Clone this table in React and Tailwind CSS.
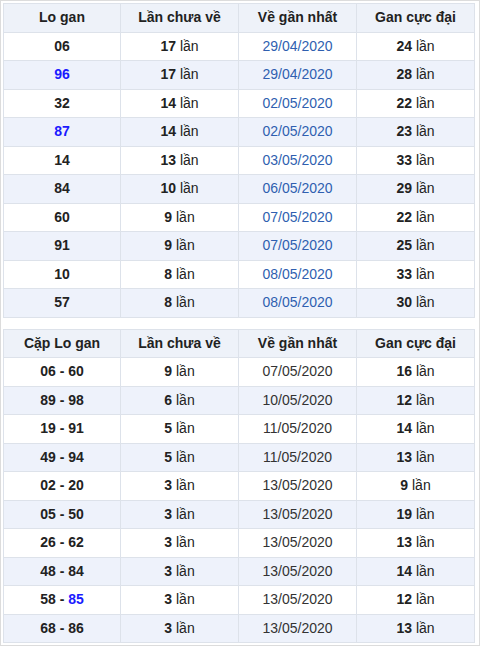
import React from 'react';

const loGan = [
  { so: '06', lan: 17, ngay: '29/04/2020', max: 24 },
  { so: '96', lan: 17, ngay: '29/04/2020', max: 28, hot: true },
  { so: '32', lan: 14, ngay: '02/05/2020', max: 22 },
  { so: '87', lan: 14, ngay: '02/05/2020', max: 23, hot: true },
  { so: '14', lan: 13, ngay: '03/05/2020', max: 33 },
  { so: '84', lan: 10, ngay: '06/05/2020', max: 29 },
  { so: '60', lan: 9, ngay: '07/05/2020', max: 22 },
  { so: '91', lan: 9, ngay: '07/05/2020', max: 25 },
  { so: '10', lan: 8, ngay: '08/05/2020', max: 33 },
  { so: '57', lan: 8, ngay: '08/05/2020', max: 30 },
];

const capLoGan = [
  { a: '06', b: '60', lan: 9, ngay: '07/05/2020', max: 16 },
  { a: '89', b: '98', lan: 6, ngay: '10/05/2020', max: 12 },
  { a: '19', b: '91', lan: 5, ngay: '11/05/2020', max: 14 },
  { a: '49', b: '94', lan: 5, ngay: '11/05/2020', max: 13 },
  { a: '02', b: '20', lan: 3, ngay: '13/05/2020', max: 9 },
  { a: '05', b: '50', lan: 3, ngay: '13/05/2020', max: 19 },
  { a: '26', b: '62', lan: 3, ngay: '13/05/2020', max: 13 },
  { a: '48', b: '84', lan: 3, ngay: '13/05/2020', max: 14 },
  { a: '58', b: '85', lan: 3, ngay: '13/05/2020', max: 12, hotB: true },
  { a: '68', b: '86', lan: 3, ngay: '13/05/2020', max: 13 },
];

const cell = 'border border-[#dde2ea] text-center h-[28.5px] p-0';

const Lan = ({ n }) => (
  <>
    <span className="font-bold">{n}</span> lần
  </>
);

const Header = ({ first }) => (
  <thead>
    <tr className="bg-[#eef2f9]">
      <th className={`${cell} w-[117px] font-bold`}>{first}</th>
      <th className={`${cell} w-[118px] font-bold`}>Lần chưa về</th>
      <th className={`${cell} w-[118px] font-bold`}>Về gần nhất</th>
      <th className={`${cell} font-bold`}>Gan cực đại</th>
    </tr>
  </thead>
);

export default function App() {
  return (
    <div
      className="w-[480px] h-[646px] border border-[#dcdcdc] p-[2px] bg-white text-[14px] text-[#222]"
      style={{ fontFamily: '"Liberation Sans", Arial, sans-serif' }}
    >
      <table className="w-[472px] border-collapse table-fixed">
        <Header first="Lo gan" />
        <tbody>
          {loGan.map((r, i) => (
            <tr key={r.so} className={i % 2 ? 'bg-[#eef2fb]' : 'bg-white'}>
              <td className={`${cell} font-bold ${r.hot ? 'text-[#1a1aff]' : ''}`}>{r.so}</td>
              <td className={cell}><Lan n={r.lan} /></td>
              <td className={`${cell} text-[#2f5fb0]`}>{r.ngay}</td>
              <td className={cell}><Lan n={r.max} /></td>
            </tr>
          ))}
        </tbody>
      </table>

      <table className="w-[472px] border-collapse table-fixed mt-[11px]">
        <Header first="Cặp Lo gan" />
        <tbody>
          {capLoGan.map((r, i) => (
            <tr key={r.a + r.b} className={i % 2 ? 'bg-[#eef2fb]' : 'bg-white'}>
              <td className={`${cell} font-bold`}>
                {r.a} - <span className={r.hotB ? 'text-[#1a1aff]' : ''}>{r.b}</span>
              </td>
              <td className={cell}><Lan n={r.lan} /></td>
              <td className={`${cell} text-[#333]`}>{r.ngay}</td>
              <td className={cell}><Lan n={r.max} /></td>
            </tr>
          ))}
        </tbody>
      </table>
    </div>
  );
}
